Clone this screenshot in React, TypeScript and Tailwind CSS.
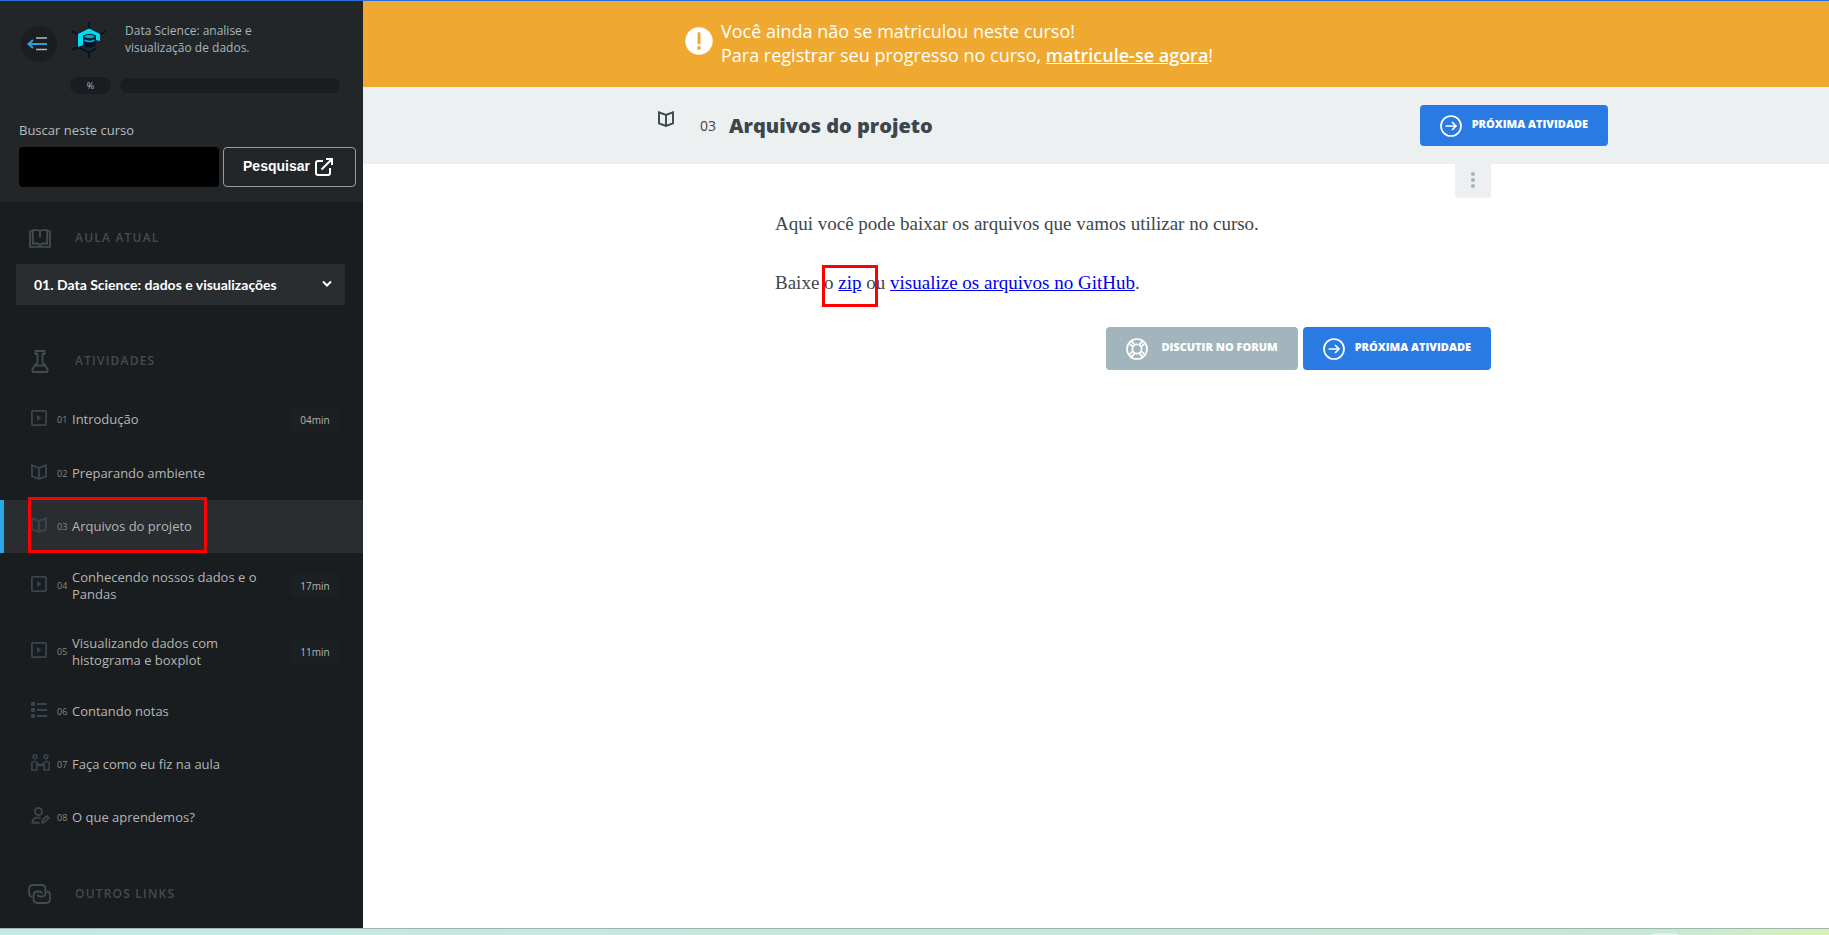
import type { ReactNode } from 'react';

type IconName = 'video' | 'book' | 'list' | 'people' | 'userEdit';

const activities: { num: string; title: string; icon: IconName; time?: string; active?: boolean }[] = [
  { num: '01', title: 'Introdução', icon: 'video', time: '04min' },
  { num: '02', title: 'Preparando ambiente', icon: 'book' },
  { num: '03', title: 'Arquivos do projeto', icon: 'book', active: true },
  { num: '04', title: 'Conhecendo nossos dados e o Pandas', icon: 'video', time: '17min' },
  { num: '05', title: 'Visualizando dados com histograma e boxplot', icon: 'video', time: '11min' },
  { num: '06', title: 'Contando notas', icon: 'list' },
  { num: '07', title: 'Faça como eu fiz na aula', icon: 'people' },
  { num: '08', title: 'O que aprendemos?', icon: 'userEdit' },
];

function BookIcon() {
  return (
    <svg width="16" height="16" viewBox="0 0 16 16" fill="none" stroke="currentColor" strokeWidth="1.9">
      <path d="M1 1.3v11L8 15l7-2.7v-11L8 4zM8 4v11" />
    </svg>
  );
}

function ActivityIcon({ name }: { name: IconName }) {
  if (name === 'book') return <BookIcon />;
  if (name === 'video') {
    return (
      <svg width="16" height="16" viewBox="0 0 16 16" fill="none" stroke="currentColor" strokeWidth="1.8">
        <rect x="0.9" y="0.9" width="14.2" height="14.2" rx="1" />
        <path d="M6 5v6l4.500-3z" fill="currentColor" stroke="none" />
      </svg>
    );
  }
  if (name === 'list') {
    return (
      <svg width="16" height="16" viewBox="0 0 16 16" fill="currentColor">
        <rect width="4" height="4" rx="1" />
        <rect y="6" width="4" height="4" rx="1" />
        <rect y="12" width="4" height="4" rx="1" />
        <path d="M6 1h10v2H6zM6 7h10v2H6zM6 13h10v2H6z" />
      </svg>
    );
  }
  if (name === 'people') {
    return (
      <svg width="19" height="17" viewBox="0 0 19 17" fill="none" stroke="currentColor" strokeWidth="1.6">
        <circle cx="4" cy="2.700" r="1.900" />
        <circle cx="15" cy="2.700" r="1.900" />
        <path d="M.9 16V9.500Q.9 7.500 2.800 7.500h1.500L8 10.500h3l3.700-3h1.500q2 0 2 2V16h-5v-5.500l-2.500 1h-2.400l-2.500-1V16z" />
      </svg>
    );
  }
  return (
    <svg width="19" height="17" viewBox="0 0 19 17" fill="none" stroke="currentColor" strokeWidth="1.9">
      <circle cx="7.500" cy="4.500" r="3.500" />
      <path d="M8 15.700H1.500c0-3 1.500-5 4.500-5h3" strokeLinecap="round" />
      <path d="M11 15.700l.5-2.500 4.300-4.300 2 2-4.300 4.300z" strokeLinejoin="round" />
    </svg>
  );
}

function CourseLogo() {
  return (
    <svg width="36" height="36" viewBox="0 0 36 36" fill="none">
      <path d="M18 0v7M1 9l7 4M35 9l-7 4M1 28l6-3 11 5.500 7-4M18 30v6" stroke="#06142b" strokeWidth="2" />
      <path d="M7 12l11-5.500L29 12v7l-4-1V13H12v10l-5 2z" fill="#00dcf5" />
      <path d="M12.500 14v10q6 3.500 12 0V14z" fill="#06142b" />
      <ellipse cx="18.500" cy="14.500" rx="5.500" ry="2.200" fill="#0aa6c0" stroke="#06142b" />
      <path d="M13.500 18q5 2.800 10 0" stroke="#00b9d2" strokeWidth="1.500" />
    </svg>
  );
}

function ArrowCircle() {
  return (
    <svg width="22" height="22" viewBox="0 0 22 22" fill="none" stroke="currentColor" strokeWidth="1.7">
      <circle cx="11" cy="11" r="10" />
      <path d="M5.500 11h10M12 7l4 4-4 4" />
    </svg>
  );
}

function LifeRing() {
  return (
    <svg width="22" height="22" viewBox="0 0 22 22" fill="none" stroke="currentColor" strokeWidth="1.7">
      <circle cx="11" cy="11" r="10" />
      <circle cx="11" cy="11" r="4.600" />
      <path d="M3.200 5.400l3.700 3.400M5.400 3.200l3.400 3.700M18.800 5.400l-3.700 3.400M16.600 3.200l-3.400 3.700M3.200 16.600l3.700-3.400M5.400 18.800l3.400-3.700M18.800 16.600l-3.700-3.400M16.600 18.800l-3.400-3.700" />
    </svg>
  );
}

function SectionTitle({ icon, children }: { icon: ReactNode; children: ReactNode }) {
  return (
    <div className="flex h-6 items-center text-[#434c51]">
      <span className="flex w-[23px] justify-center">{icon}</span>
      <h2 className="ml-6 text-[12px] font-semibold tracking-widest">{children}</h2>
    </div>
  );
}

function Sidebar() {
  return (
    <aside className="w-[363px] shrink-0 bg-[#191d1f]">
      <div className="bg-[#222629] pb-[15px] pt-[21px]">
        <div className="flex items-start">
          <button aria-label="Recolher menu" className="ml-[21px] mt-1 flex size-9 items-center justify-center rounded-full bg-[#1a1e20] pr-1">
            <svg width="20" height="16" viewBox="0 0 20 16" fill="none" strokeWidth="2">
              <path d="M9 2h11M9 13.500h11" stroke="#b4b8ba" strokeWidth="1.600" />
              <path d="M1.500 8H20M6 4L1.500 8 6 12" stroke="#2f9fe0" />
            </svg>
          </button>
          <a href="#curso" className="ml-[14px] flex items-start">
            <CourseLogo />
            <span className="ml-[18px] w-40 text-[12px] leading-[17px] text-[#a3b6be]">
              Data Science: analise e visualização de dados.
            </span>
          </a>
        </div>
        <div className="mt-[15px] flex items-center pl-[70px] pr-[23px]">
          <span className="w-[41px] rounded-full bg-[#191d1f] text-center text-[9px] leading-[17px] text-[#a3b6be]">%</span>
          <div role="progressbar" aria-label="Progresso" aria-valuenow={0} className="ml-[9px] h-[15px] flex-1 rounded-full bg-[#191d1f]" />
        </div>
        <form className="mt-[26px] pl-[19px] pr-[7px]" onSubmit={(e) => e.preventDefault()}>
          <label htmlFor="busca" className="block text-[13px] leading-5 text-[#bcbcbc]">Buscar neste curso</label>
          <div className="mt-[7px] flex gap-1">
            <input id="busca" type="text" className="h-10 w-[200px] rounded bg-black px-2 text-white" />
            <button className="flex h-10 flex-1 items-center justify-center gap-1 rounded border border-[#999c9e] pr-[2px] font-['Liberation_Sans',sans-serif] text-[14px] font-bold text-white">
              <span className="pb-[2px]">Pesquisar</span>
              <svg width="20" height="20" viewBox="0 0 20 20" fill="none" stroke="currentColor" strokeWidth="2">
                <path d="M9 4H4Q2 4 2 6v10q0 2 2 2h10q2 0 2-2v-5M7.500 12.500L18 2M12 2h6v6" />
              </svg>
            </button>
          </div>
        </form>
      </div>

      <section className="px-4 pt-6">
        <div className="pl-3">
          <SectionTitle
            icon={
              <svg width="22" height="19" viewBox="0 0 22 19" fill="none" stroke="currentColor" strokeWidth="1.800">
                <path d="M3.500 2.500H1v15.300h20V2.500h-2.500" />
                <path d="M3.800 1.200h5.200l2 1 2-1h5.200v13.300h-5.200l-2 1.500-2-1.500H3.800zM11 2v6.500" />
              </svg>
            }
          >
            AULA ATUAL
          </SectionTitle>
        </div>
        <div className="relative mt-[14px] mr-[2px]">
          <select aria-label="Aula atual" className="h-[41px] w-full appearance-none bg-[#292d2f] pl-[18px] pr-10 font-['Lato',sans-serif] text-[14px] font-bold text-white">
            <option>01. Data Science: dados e visualizações</option>
          </select>
          <svg className="pointer-events-none absolute right-[13px] top-4" width="10" height="8" viewBox="0 0 10 8" fill="none" stroke="#fff" strokeWidth="2">
            <path d="M1 1.500l4 4 4-4" />
          </svg>
        </div>
      </section>

      <section className="pt-11">
        <div className="pl-7">
          <SectionTitle
            icon={
              <svg width="18" height="23" viewBox="0 0 18 23" fill="none" stroke="currentColor" strokeWidth="1.800">
                <path d="M4.500 1h9v3h-2v8l5 7q1 3-1.500 3H3q-2.500 0-1.500-3l5-7V4h-2zM5 15.500h8" />
              </svg>
            }
          >
            ATIVIDADES
          </SectionTitle>
        </div>
        <ul className="mt-[18px]">
          {activities.map((a) => (
            <li key={a.num} className={a.active ? 'relative bg-[#292d2f]' : 'first:pb-px first:pt-[2px]'}>
              <a
                href={'#' + a.num}
                className={`flex min-h-[53px] items-center border-l-4 py-4 pl-[27px] pr-6 ${a.active ? 'border-[#2ba6e8]' : 'border-transparent'}`}
              >
                <span className="w-[26px] shrink-0 pb-1 text-[#3b444b]"><ActivityIcon name={a.icon} /></span>
                <span className="w-[15px] shrink-0 text-[9px] text-[#85888a]">{a.num}</span>
                <span className="w-[185px] text-[13px] leading-[17px] text-[#b5b5b5]">{a.title}</span>
                {a.time && (
                  <span className="ml-auto -my-1 w-12 rounded-sm bg-[#1c2022] text-center text-[10px] leading-6 text-[#b5b5b5]">{a.time}</span>
                )}
              </a>
              {a.active && <span className="pointer-events-none absolute -top-[3px] left-7 h-14 w-[179px] border-3 border-[#f00]" />}
            </li>
          ))}
        </ul>
      </section>

      <section className="pb-5 pl-7 pt-[38px]">
        <SectionTitle
          icon={
            <svg width="23" height="20" viewBox="0 0 23 20" fill="none" stroke="currentColor" strokeWidth="1.800">
              <path d="M4 13Q1 12 1 8.500V5q0-4 4-4h9q3.500 0 3.500 4v4q0 3.500-4 3.500H12q-2 0-2-2" />
              <path d="M19 7.500q3 .5 3 3.500v4q0 4-4 4H9.500q-4 0-4-4v-3.500q0-4 4-4H11q3 0 3 2" />
            </svg>
          }
        >
          OUTROS LINKS
        </SectionTitle>
      </section>
    </aside>
  );
}

export default function App() {
  return (
    <div className="flex min-h-screen flex-col border-t border-[#2a6fd6] bg-white font-['Open_Sans','Noto_Sans',sans-serif]">
      <div className="flex flex-1">
        <Sidebar />

        <main className="min-w-0 flex-1">
          <div className="bg-[#f0a930] py-[19px] text-white">
            <div className="mx-auto flex h-12 max-w-[1024px] items-center pl-[101px]">
              <svg width="28" height="28" viewBox="0 0 28 28" className="mb-[6px] shrink-0">
                <circle cx="14" cy="14" r="13.700" fill="#fff" />
                <path d="M14 6.500v9.500" stroke="#f0a930" strokeWidth="3" strokeLinecap="round" />
                <circle cx="14" cy="21" r="1.900" fill="#f0a930" />
              </svg>
              <p className="ml-2 pb-[2px] text-[18px] leading-6">
                Você ainda não se matriculou neste curso!
                <br />
                Para registrar seu progresso no curso, <a href="#matricula" className="font-semibold underline">matricule-se agora</a>!
              </p>
            </div>
          </div>

          <header className="bg-[#ecf0f1]">
            <div className="mx-auto flex h-[77px] max-w-[1024px] items-center pl-[74px]">
              <span className="pb-[14px] text-[#3d464d]"><BookIcon /></span>
              <span className="ml-[26px] text-[14px] text-[#3d464d]">03</span>
              <h1 className="ml-[13px] text-[20px] font-extrabold text-[#3d464d]">Arquivos do projeto</h1>
              <a href="#proxima" className="ml-auto flex h-[41px] items-center gap-[10px] rounded bg-[#2a7ae4] px-5 text-[11px] font-extrabold text-white">
                <ArrowCircle />
                <span className="pb-[3px]">PRÓXIMA ATIVIDADE</span>
              </a>
            </div>
          </header>

          <div className="mx-auto max-w-[1024px] pl-[191px] pr-[117px]">
            <div className="flex justify-end">
              <button aria-label="Mais opções" className="flex h-[34px] w-9 items-center justify-center rounded-b bg-[#ecf0f1] pb-[2px]">
                <svg width="4" height="18" viewBox="0 0 4 18" fill="#a3b6be">
                  <circle cx="2" cy="3" r="2" />
                  <circle cx="2" cy="9" r="2" />
                  <circle cx="2" cy="15" r="2" />
                </svg>
              </button>
            </div>
            <article className="mt-[11px] space-y-[30px] font-['Liberation_Serif',serif] text-[19px] leading-[29px] text-[#3d464d]">
              <p>Aqui você pode baixar os arquivos que vamos utilizar no curso.</p>
              <p>
                Baixe o{' '}
                <span className="relative">
                  <a href="#zip" className="text-[#0000ee] underline">zip</a>
                  <span className="pointer-events-none absolute -inset-x-4 -bottom-[14px] h-[42px] border-3 border-[#f00]" />
                </span>{' '}
                ou <a href="#github" className="text-[#0000ee] underline">visualize os arquivos no GitHub</a>.
              </p>
            </article>
            <div className="mt-[30px] flex justify-end gap-[5px] text-[11px] font-extrabold text-white">
              <a href="#forum" className="flex h-[43px] items-center gap-[13px] rounded bg-[#a2b5bd] px-5">
                <LifeRing />
                <span className="pb-[3px]">DISCUTIR NO FORUM</span>
              </a>
              <a href="#proxima" className="flex h-[43px] items-center gap-[10px] rounded bg-[#2a7ae4] px-5">
                <ArrowCircle />
                <span className="pb-[3px]">PRÓXIMA ATIVIDADE</span>
              </a>
            </div>
          </div>
        </main>
      </div>

      <footer className="flex h-[7px] justify-end overflow-hidden border-t border-[#9fb5ae] bg-linear-to-r from-[#c1e9e5] via-[#c5e7d6] via-90% to-[#d8f2b8]">
        <span className="mr-[150px] mt-1 h-4 w-7 rounded-sm bg-[#e0f2ea]" />
      </footer>
    </div>
  );
}
